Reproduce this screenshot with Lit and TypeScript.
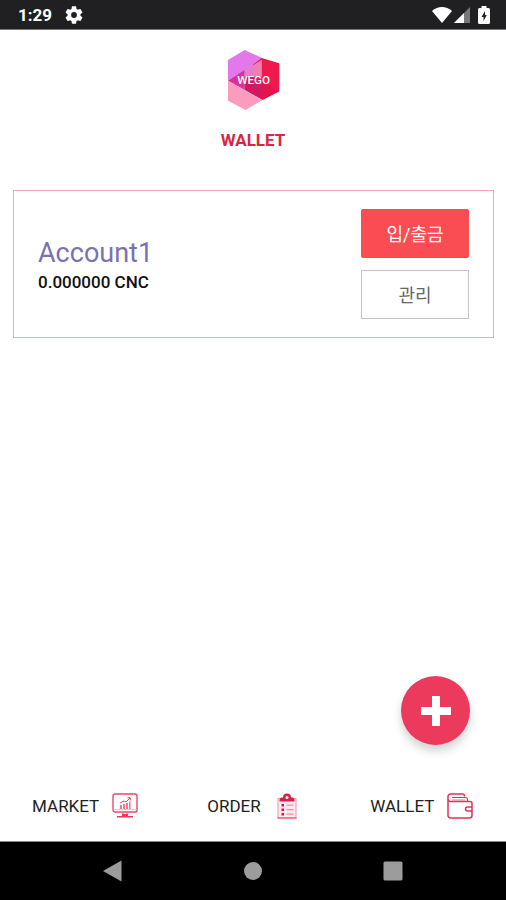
import { LitElement, html, css, svg } from "lit";
import { customElement, state } from "lit/decorators.js";

const logo = svg`
  <svg class="logo" viewBox="69 30 162 180" role="img" aria-label="WEGO">
    <polygon points="75,60 125,30 178,54 178,62 75,122" fill="#e278ea"/>
    <polygon points="176,54 229,70 229,154 178,180 150,120 150,74" fill="#ee1a4e"/>
    <polygon points="125,92 176,60 176,112 125,112" fill="#e67cc8"/>
    <polygon points="150,77 176,60 176,112 150,112" fill="#ee7fae"/>
    <polygon points="75,122 125,90 125,150" fill="#d9309c"/>
    <polygon points="125,110 178,110 178,180 125,150" fill="#cf1a62"/>
    <polygon points="178,120 229,154 178,180" fill="#e2164e"/>
    <polygon points="75,122 178,180 128,210 75,182" fill="#fb9bbd"/>
    <text class="logo-text" x="152" y="131" text-anchor="middle">WEGO</text>
  </svg>`;

const marketIcon = svg`
  <svg class="icon" viewBox="0 0 26 26" aria-hidden="true">
    <g fill="none" stroke="#e8486a">
      <rect x="1" y="1" width="24" height="18" rx="2" stroke-width="1.4"/>
      <path d="M1 16.500h24" stroke="#f3a0b2" stroke-width=".7"/>
      <path d="M8 10l4-2 2 1 4-4M15.500 4.700h2.800v2.800" stroke-width="1"/>
      <path d="M11 19.500v3M15 19.500v3" stroke-width="1"/>
    </g>
    <path d="M8 12h2v4H8zM11 11h2v5h-2zM14 10h2v6h-2zM17 8.500h1.600V16H17z" fill="#ee7890"/>
    <path d="M10 21h6v2h-6zM5 23h16v1.600H5z" fill="#e8385c"/>
  </svg>`;

const orderIcon = svg`
  <svg class="icon" viewBox="0 0 26 26" aria-hidden="true">
    <rect x="4" y="5.500" width="18" height="19.500" fill="#fdeaf0" stroke="#f4a0b4" stroke-width="1.2"/>
    <path d="M3.500 25h19" stroke="#ec6482" stroke-width="1.4"/>
    <path d="M5.500 8.500V7A2.500 2.500 0 0 1 8 4.500H9A4 4 0 0 1 17 4.500H18A2.500 2.500 0 0 1 20.500 7v1.500z" fill="#dc1f49"/>
    <circle cx="13" cy="4.500" r="1.500" fill="#fff"/>
    <path d="M7.500 11h2.500v2.500H7.500zM7.500 15.500h2.500v2.500H7.500zM7.500 20h2.500v2.500H7.500z" fill="#dc143f"/>
    <path d="M12.500 12.200h7M12.500 16.700h7M12.500 21.200h7" stroke="#f08ea4" stroke-width="1.200"/>
  </svg>`;

const walletIcon = svg`
  <svg class="icon" viewBox="0 0 26 26" aria-hidden="true">
    <g fill="none" stroke="#e4305c" stroke-width="1.500" stroke-linejoin="round">
      <path d="M1 3.500V22.500A2.500 2.500 0 0 0 3.500 25H22.500A2.500 2.500 0 0 0 25 22.500V10.500A2 2 0 0 0 23 8.500H3.500A2.500 2.500 0 0 1 1 6V3.500A2.500 2.500 0 0 1 3.500 1H15.500A2 2 0 0 1 17.500 3V3.500"/>
      <path d="M5 4.500H18.500A2 2 0 0 1 20.500 6.500V8" stroke-width="1.200"/>
      <path d="M5 7H18" stroke="#f48aa2" stroke-width="1.200"/>
      <path d="M25 14H20.500a2 2 0 0 0 0 4H25"/>
    </g>
  </svg>`;

@customElement("app-root")
export class AppRoot extends LitElement {
  @state() private accounts = [{ name: "Account1", balance: "0.000000 CNC" }];

  private tabs = [
    { label: "MARKET", icon: marketIcon },
    { label: "ORDER", icon: orderIcon },
    { label: "WALLET", icon: walletIcon },
  ];

  static styles = css`
    :host {
      display: flex;
      flex-direction: column;
      min-height: 100vh;
      background: #fff;
      color: #111;
      font-family: Roboto, "Noto Sans CJK KR", sans-serif;
    }
    * { box-sizing: border-box; }
    button { font: inherit; cursor: pointer; margin: 0; padding: 0; }
    .status {
      display: flex;
      align-items: center;
      height: 30px;
      padding: 0 16px 0 18px;
      background: #202022;
      border-bottom: 1px solid #77777a;
      color: #fff;
      font-size: 17px;
      font-weight: 700;
      line-height: 30px;
    }
    .gear { width: 18px; height: 18px; margin-left: 13px; }
    .signals { display: flex; align-items: center; gap: 2px; margin-left: auto; }
    .wifi { width: 20px; height: 16px; }
    .cell { width: 16px; height: 16px; }
    .battery { width: 12px; height: 18px; margin-left: 6px; }
    header {
      display: flex;
      flex-direction: column;
      align-items: center;
      gap: 20px;
      padding-top: 20px;
    }
    .logo { width: 54px; height: 60px; }
    .logo-text { font: 500 35px Roboto, sans-serif; fill: #fff; }
    h1 {
      margin: 0;
      font-size: 17px;
      line-height: 20px;
      font-weight: 700;
      color: #dc2443;
    }
    main { flex: 1; padding: 40px 12px 0 13px; }
    .card {
      display: flex;
      align-items: center;
      justify-content: space-between;
      padding: 18px 24px;
      border: 1px solid #f3a8b2;
    }
    .info { padding-top: 4px; }
    h2 {
      margin: 0;
      font-size: 27px;
      line-height: 32px;
      font-weight: 400;
      color: #7c70b4;
    }
    .balance { margin: 0; font-size: 17px; line-height: 26px; font-weight: 500; }
    .actions { display: flex; flex-direction: column; gap: 12px; }
    .action {
      width: 108px;
      height: 49px;
      padding-bottom: 2px;
      border: 1px solid #c4c4c4;
      background: #fff;
      color: #666;
      font-size: 18px;
    }
    .action.primary {
      border-color: #f84a50;
      border-radius: 2px;
      background: #f94d53;
      color: #fff;
    }
    .fab-row { display: flex; justify-content: flex-end; padding: 0 36px 26px; }
    .fab {
      display: grid;
      place-items: center;
      width: 69px;
      height: 69px;
      border: 0;
      border-radius: 50%;
      background: #ec3a5c;
      box-shadow: 0 6px 10px rgba(0, 0, 0, 0.18);
    }
    .plus { width: 30px; height: 30px; }
    .tabs { display: grid; grid-template-columns: repeat(3, 1fr); padding-left: 1px; }
    .tab {
      display: flex;
      align-items: center;
      justify-content: center;
      gap: 13px;
      height: 70px;
      color: #222;
      font-size: 17px;
      text-decoration: none;
    }
    .icon { width: 26px; height: 26px; }
    .system {
      display: flex;
      align-items: center;
      justify-content: center;
      gap: 116px;
      height: 59px;
      border-top: 1px solid #8b8b8b;
      background: #000;
    }
    .key { display: block; width: 24px; height: 24px; border: 0; background: none; }
    .key svg { display: block; width: 24px; height: 24px; fill: #9c9c9c; }
  `;

  render() {
    return html`
      <div class="status">
        <span>1:29</span>
        <svg class="gear" viewBox="2 2 20 20" fill="#fff" aria-hidden="true">
          <path d="M19.140 12.940c.04-.3.060-.61.060-.94s-.02-.64-.07-.94l2.030-1.580a.49.49 0 0 0 .12-.61l-1.920-3.320a.49.49 0 0 0-.59-.22l-2.390.96a7 7 0 0 0-1.620-.94l-.36-2.540A.48.48 0 0 0 13.920 2.400h-3.840a.48.48 0 0 0-.47.41l-.36 2.540c-.59.24-1.130.57-1.620.94l-2.390-.96a.48.48 0 0 0-.59.22L2.740 8.870a.47.47 0 0 0 .12.61l2.030 1.580a6.500 6.500 0 0 0 0 1.880l-2.030 1.580a.49.49 0 0 0-.12.61l1.920 3.320c.12.22.37.29.59.22l2.390-.96c.5.38 1.030.7 1.620.94l.36 2.540c.05.24.24.41.47.41h3.840c.24 0 .44-.17.47-.41l.36-2.540a7 7 0 0 0 1.620-.94l2.390.96c.22.08.47 0 .59-.22l1.920-3.320a.47.47 0 0 0-.12-.61zM12 15.200a3.200 3.200 0 1 1 0-6.400 3.200 3.200 0 0 1 0 6.400z"/>
        </svg>
        <span class="signals">
          <svg class="wifi" viewBox="0 0 20 16" fill="#fff" aria-hidden="true">
            <path d="M10 16L0 4Q4.500 0 10 0T20 4z"/>
          </svg>
          <svg class="cell" viewBox="0 0 16 16" aria-hidden="true">
            <path d="M0 16L16 0V16z" fill="#77777a"/>
            <path d="M0 16L10 6V16z" fill="#fff"/>
          </svg>
          <svg class="battery" viewBox="0 0 12 18" aria-hidden="true">
            <path d="M3.500 0h5v2H10.500a1.500 1.500 0 0 1 1.500 1.500v13A1.500 1.500 0 0 1 10.500 18h-9A1.500 1.500 0 0 1 0 16.500v-13A1.500 1.500 0 0 1 1.500 2H3.500z" fill="#fff"/>
            <path d="M7 5L3.500 11H5.500V15L8.800 9H7z" fill="#202022"/>
          </svg>
        </span>
      </div>
      <header>
        ${logo}
        <h1>WALLET</h1>
      </header>
      <main>
        ${this.accounts.map(
          (a) => html`
            <section class="card">
              <div class="info">
                <h2>${a.name}</h2>
                <p class="balance">${a.balance}</p>
              </div>
              <div class="actions">
                <button class="action primary">입/출금</button>
                <button class="action">관리</button>
              </div>
            </section>
          `
        )}
      </main>
      <div class="fab-row">
        <button class="fab" aria-label="Add account">
          <svg class="plus" viewBox="0 0 30 30" fill="#fff" aria-hidden="true">
            <path d="M11 0h8v11h11v8H19v11h-8V19H0v-8h11z"/>
          </svg>
        </button>
      </div>
      <nav class="tabs">
        ${this.tabs.map(
          (t) => html`<a class="tab" href="#${t.label.toLowerCase()}"><span>${t.label}</span>${t.icon}</a>`
        )}
      </nav>
      <div class="system">
        <button class="key" aria-label="Back">
          <svg viewBox="0 0 24 24"><path d="M2 12L20.500 1.500V22.500z"/></svg>
        </button>
        <button class="key" aria-label="Home">
          <svg viewBox="0 0 24 24"><circle cx="12" cy="12" r="9"/></svg>
        </button>
        <button class="key" aria-label="Recent apps">
          <svg viewBox="0 0 24 24"><rect x="2.500" y="2.500" width="19" height="19" rx="1.500"/></svg>
        </button>
      </div>
    `;
  }
}
